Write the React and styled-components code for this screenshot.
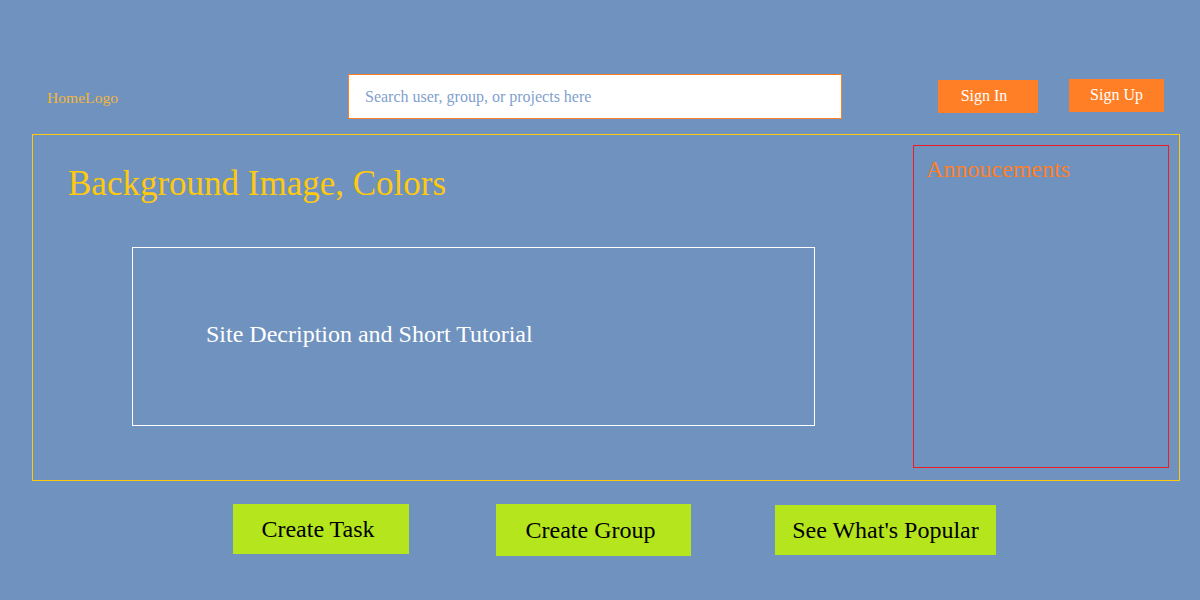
import React from 'react';
import styled, { createGlobalStyle } from 'styled-components';

const GlobalStyle = createGlobalStyle`
    html, body {
        margin: 0;
        padding: 0;
        background: #6f92be;
        font-family: "Liberation Serif", "DejaVu Serif", serif;
    }
`

const Page = styled.div`
    width: 1200px;
    height: 600px;
    padding-top: 74px;
    box-sizing: border-box;
    background: #6f92be;
    overflow: hidden;
`

const Header = styled.header`
    display: flex;
    align-items: center;
    height: 45px;
    padding-left: 47px;
`

const Logo = styled.div`
    width: 301px;
    color: #f2b640;
    font-size: 15.6px;
    padding-top: 3px;
`

const Search = styled.input`
    width: 494px;
    height: 45px;
    box-sizing: border-box;
    border: 1px solid #ff7f27;
    background: #fff;
    padding: 0 16px;
    font-family: inherit;
    font-size: 16px;
    outline: none;
    &::placeholder {
        color: #7f9fcf;
    }
`

const HeaderButton = styled.button`
    width: ${p => p.$w}px;
    height: 33px;
    margin-left: ${p => p.$ml}px;
    margin-top: ${p => p.$mt || 0}px;
    border: none;
    background: #ff7f27;
    color: #fff;
    font-family: inherit;
    font-size: 16px;
    padding: 0 ${p => p.$pr || 0}px 2px 0;
`

const Hero = styled.section`
    display: flex;
    justify-content: space-between;
    margin: 15px 0 0 32px;
    width: 1148px;
    height: 347px;
    box-sizing: border-box;
    border: 1px solid #ffc90e;
    padding: 10px 10px 12px 35px;
`

const HeroMain = styled.div`
    display: flex;
    flex-direction: column;
`

const Title = styled.h1`
    margin: 19px 0 0;
    font-weight: normal;
    font-size: 35px;
    line-height: 40px;
    color: #ffc90e;
`

const Description = styled.div`
    display: flex;
    align-items: center;
    margin: 43px 0 0 64px;
    width: 683px;
    height: 179px;
    box-sizing: border-box;
    border: 1px solid #fff;
    padding: 0 0 4px 73px;
    color: #fff;
    font-size: 24px;
`

const Announcements = styled.aside`
    width: 256px;
    height: 323px;
    box-sizing: border-box;
    border: 1px solid #ed1c24;
    padding: 10px 12px;
`

const AnnouncementTitle = styled.h2`
    margin: 0;
    font-weight: normal;
    font-size: 24px;
    color: #ff7f27;
`

const Actions = styled.div`
    display: flex;
    align-items: flex-start;
    margin-top: 23px;
    padding-left: 233px;
`

const ActionButton = styled.button`
    width: ${p => p.$w}px;
    height: ${p => p.$h}px;
    margin-left: ${p => p.$ml || 0}px;
    margin-top: ${p => p.$mt || 0}px;
    border: none;
    background: #b5e61d;
    color: #000;
    font-family: inherit;
    font-size: 24px;
    padding: 0 ${p => p.$pr || 0}px 0 0;
`

const App = () => {
    return (
        <>
            <GlobalStyle />
            <Page>
                <Header>
                    <Logo>HomeLogo</Logo>
                    <Search placeholder="Search user, group, or projects here" />
                    <HeaderButton $w={100} $ml={96} $mt={0} $pr={8}>Sign In</HeaderButton>
                    <HeaderButton $w={95} $ml={31} $mt={-2}>Sign Up</HeaderButton>
                </Header>
                <Hero>
                    <HeroMain>
                        <Title>Background Image, Colors</Title>
                        <Description>Site Decription and Short Tutorial</Description>
                    </HeroMain>
                    <Announcements>
                        <AnnouncementTitle>Annoucements</AnnouncementTitle>
                    </Announcements>
                </Hero>
                <Actions>
                    <ActionButton $w={176} $h={50} $pr={6}>Create Task</ActionButton>
                    <ActionButton $w={195} $h={52} $ml={87} $pr={6}>Create Group</ActionButton>
                    <ActionButton $w={221} $h={50} $ml={84} $mt={1}>See What's Popular</ActionButton>
                </Actions>
            </Page>
        </>
    )
}

export default App;
